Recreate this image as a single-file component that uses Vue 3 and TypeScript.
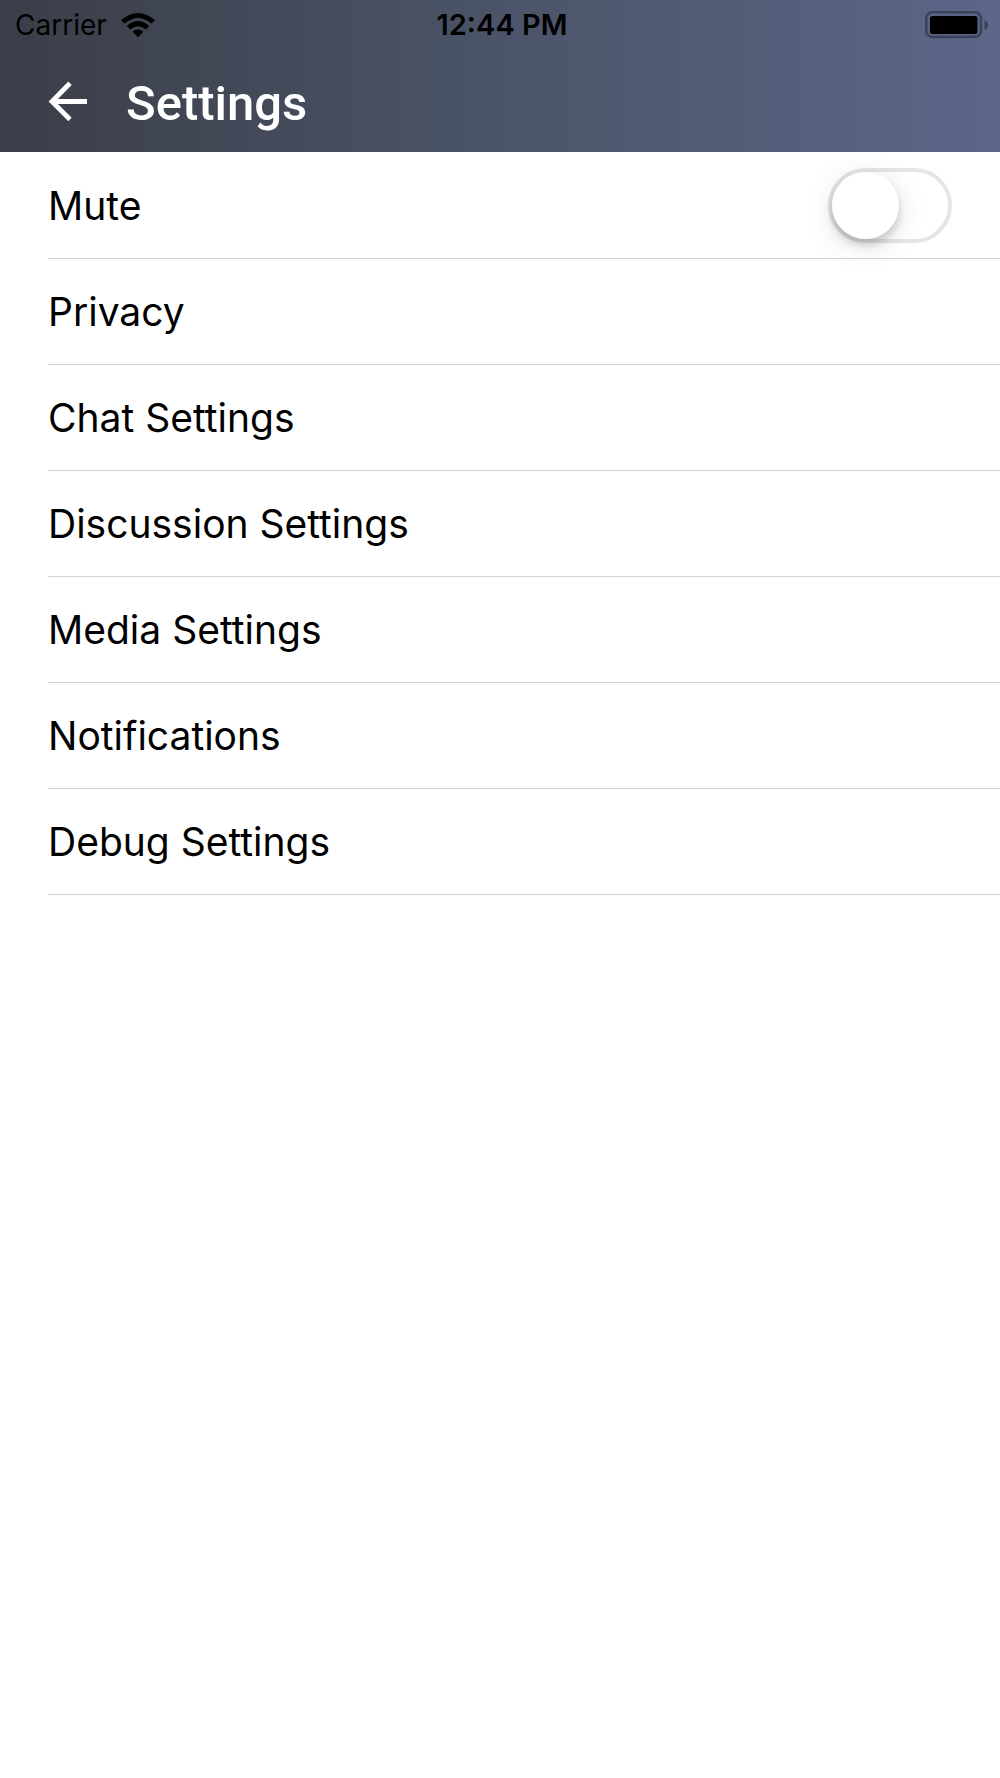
<script setup lang="ts">
import { ref } from 'vue'

interface SettingsItem {
  id: string
  label: string
}

const muted = ref(false)

const items: SettingsItem[] = [
  { id: 'privacy', label: 'Privacy' },
  { id: 'chat', label: 'Chat Settings' },
  { id: 'discussion', label: 'Discussion Settings' },
  { id: 'media', label: 'Media Settings' },
  { id: 'notifications', label: 'Notifications' },
  { id: 'debug', label: 'Debug Settings' },
]
</script>

<template>
  <div class="screen">
    <header class="header">
      <div class="status-bar">
        <div class="status-left">
          <span>Carrier</span>
          <svg class="wifi" width="34" height="25" viewBox="0 0 34 25" aria-hidden="true">
            <path d="M0 7.2Q17-7.2 34 7.2L30.6 10.6Q17-.8 3.4 10.6Z" />
            <path d="M5.8 13Q17 3.2 28.2 13L24.8 16.4Q17 10 9.2 16.4Z" />
            <path d="M11.6 18.8Q17 14.4 22.4 18.8L17 24.3Z" />
          </svg>
        </div>
        <time class="clock">12:44 PM</time>
        <div class="status-right">
          <svg width="64" height="28" viewBox="0 0 64 28" role="img" aria-label="Battery full">
            <rect x="1.3" y="1.3" width="54.6" height="24.6" rx="6" fill="none" stroke="#3b435a" stroke-width="2.6" />
            <rect x="5" y="5" width="47.5" height="18" rx="2.5" />
            <path d="M59.5 9Q63 10.500 63 14T59.5 19Z" fill="#3b435a" />
          </svg>
        </div>
      </div>
      <div class="title-bar">
        <button class="back" type="button" aria-label="Back">
          <svg width="40" height="40" viewBox="0 0 40 40" aria-hidden="true">
            <path d="M22 2.3L4 20.5L22 38.5M4 20.5H39" fill="none" stroke="#fff" stroke-width="4.8" />
          </svg>
        </button>
        <h1 class="title">Settings</h1>
      </div>
    </header>

    <main class="list">
      <div class="row">
        <label for="mute">Mute</label>
        <input id="mute" v-model="muted" class="switch" type="checkbox" role="switch" />
      </div>
      <a v-for="item in items" :key="item.id" class="row" :href="`#${item.id}`">{{ item.label }}</a>
    </main>
  </div>
</template>

<style>
body {
  margin: 0;
  background: #fff;
}
</style>

<style scoped>
.screen {
  min-height: 100vh;
  background: #fff;
  color: #000;
  font-family: Inter, "Liberation Sans", sans-serif;
}

.header {
  background: linear-gradient(90deg, #3b3e48 0%, #4b5468 50%, #5c6789 100%);
}

.status-bar {
  display: grid;
  grid-template-columns: 1fr auto 1fr;
  align-items: center;
  height: 50px;
  padding: 0 11px 0 15px;
  font-size: 28px;
  line-height: 32px;
}

.status-left {
  display: flex;
  align-items: center;
  gap: 14px;
}

.wifi {
  display: block;
}

.clock {
  font-size: 29px;
  font-weight: 600;
}

.status-right {
  display: flex;
  justify-content: flex-end;
}

.title-bar {
  display: flex;
  align-items: center;
  gap: 38px;
  height: 102px;
  padding: 0 48px;
}

.back {
  display: flex;
  padding: 0;
  border: 0;
  background: none;
  cursor: pointer;
}

.title {
  margin: 0;
  padding-top: 6px;
  color: #fff;
  font-family: Roboto, sans-serif;
  font-size: 49px;
  font-weight: 500;
  line-height: 56px;
}

.list {
  padding: 1px 0 0 48px;
}

.row {
  display: flex;
  align-items: center;
  justify-content: space-between;
  box-sizing: border-box;
  height: 106px;
  padding-right: 48px;
  border-bottom: 1px solid #d2d2d4;
  color: inherit;
  font-size: 39px;
  line-height: 48px;
  text-decoration: none;
}

.switch {
  appearance: none;
  display: flex;
  box-sizing: border-box;
  width: 124px;
  height: 75px;
  margin: 0;
  border: 4px solid #e5e5e5;
  border-radius: 38px;
  background: #fff;
  cursor: pointer;
}

.switch::before {
  content: "";
  width: 67px;
  height: 67px;
  border-radius: 50%;
  background: #fff;
  box-shadow: 0 6px 8px rgba(0, 0, 0, 0.16), 0 6px 30px rgba(0, 0, 0, 0.12);
}

.switch:checked {
  justify-content: flex-end;
  border-color: #4cd964;
  background: #4cd964;
}
</style>
